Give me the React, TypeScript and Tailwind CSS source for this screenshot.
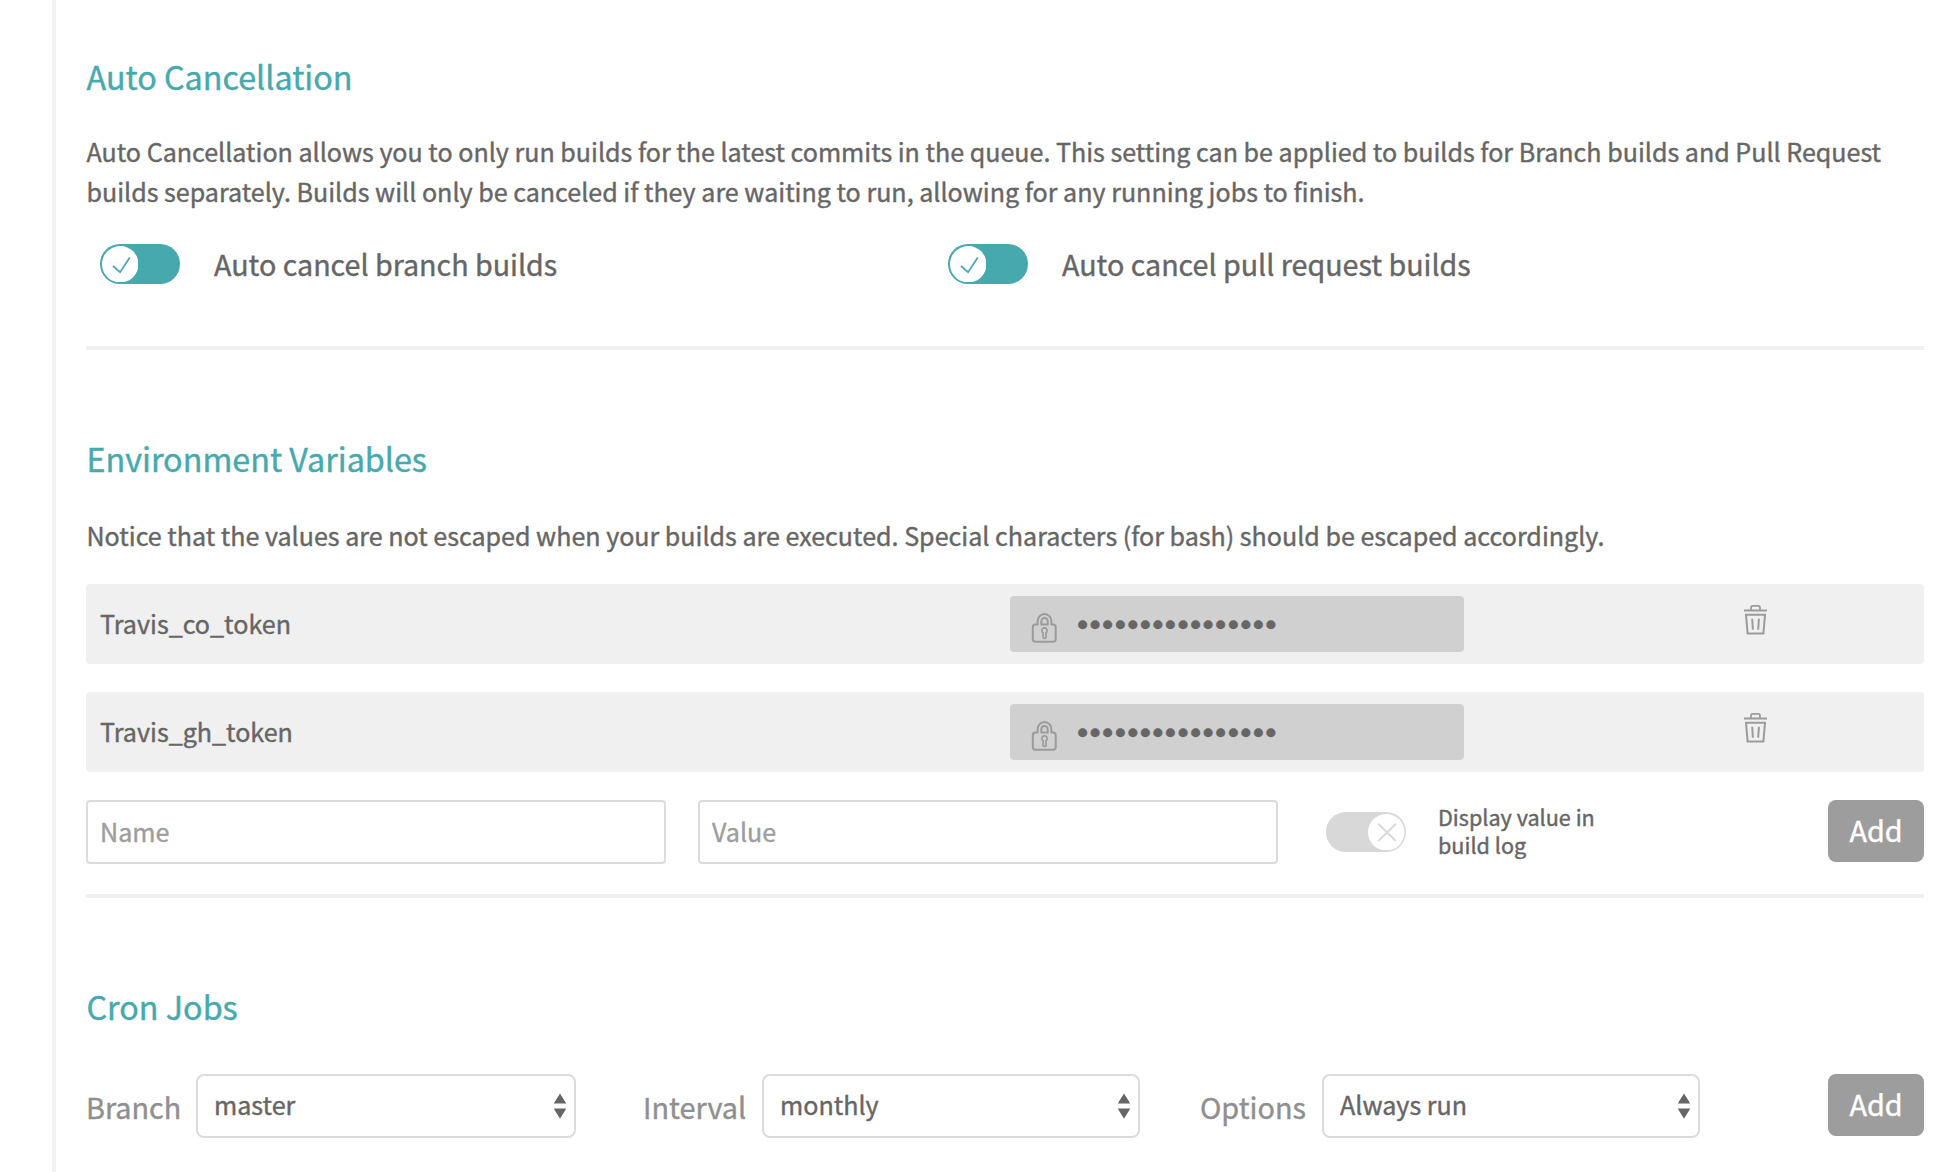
import type { ReactNode } from "react";

const maskedValue = "•".repeat(16);

function LockIcon() {
  return (
    <svg width="27" height="32" viewBox="0 0 27 32" fill="none" stroke="#9b9b9b" strokeWidth="2" strokeLinejoin="round">
      <path d="M6.600 12.600V9.500a6.900 7.600 0 0 1 13.800 0v3.100h1.700c1.600 0 2.600 1 2.600 2.600v11.800c0 1.600-1 2.700-2.600 2.700H4.400c-1.600 0-2.600-1.100-2.600-2.700V15.200c0-1.600 1-2.600 2.600-2.600z" />
      <path d="M10.300 12.600V9.600a3.200 3.700 0 0 1 6.400 0v3z" />
      <path d="M12.200 20.900a2.700 2.700 0 1 1 2.600 0l.3 4.100c0 .9-.6 1.400-1.600 1.400s-1.600-.5-1.600-1.400z" strokeWidth="1.700" />
    </svg>
  );
}

function TrashIcon() {
  return (
    <svg width="24" height="32" viewBox="0 0 24 32" fill="none" stroke="#9b9b9b" strokeWidth="2">
      <path d="M0 6.500h23" />
      <path d="M7 6V3.800c0-1.300.5-2 1.800-2h5.400c1.300 0 1.800.7 1.800 2V6" strokeWidth="1.800" />
      <path d="M2 10.700h19l-1.600 18.900H3.600z" />
      <path d="M8.200 14.700l.7 11M14.900 14.700l-.7 11" />
    </svg>
  );
}

function SortArrows() {
  return (
    <svg width="14" height="26" viewBox="0 0 14 26" fill="#666" className="pointer-events-none absolute right-[9.500px] top-[19px]">
      <path d="M7 0.500L13.300 10.500H.7zM.7 15.500h12.600L7 25.800z" />
    </svg>
  );
}

function Toggle({ on }: { on?: boolean }) {
  return on ? (
    <span className="flex h-10 w-20 shrink-0 items-center rounded-full bg-[#45a9ad] pl-[1.5px]">
      <svg width="36.500" height="36.500" viewBox="0 0 36.500 36.500" fill="none">
        <circle cx="18.250" cy="18.250" r="18.250" fill="#fff" />
        <path d="M10.900 20l7.200 6.200 9.600-14.700" stroke="#45a9ad" strokeWidth="1.700" />
      </svg>
    </span>
  ) : (
    <span className="flex h-10 w-20 shrink-0 items-center justify-end rounded-full bg-[#d8d8d8] pr-[1.5px]">
      <svg width="36.500" height="36.500" viewBox="0 0 36.500 36.500" fill="none">
        <circle cx="18.250" cy="18.250" r="18.250" fill="#fff" />
        <path d="M10.300 9.700l17.600 17.400M27.900 9.700L10.300 27.100" stroke="#d8d8d8" strokeWidth="1.900" />
      </svg>
    </span>
  );
}

function Heading({ children }: { children: ReactNode }) {
  return <h2 className="pl-[0.5px] text-[32.3px] leading-10 text-[#45a9ad]">{children}</h2>;
}

function Divider() {
  return <hr className="h-1 border-0 bg-[#f0f0f0]" />;
}

function VariableRow({ name }: { name: string }) {
  return (
    <li className="flex h-20 items-center rounded-[4px] bg-[#f0f0f0] pl-[14px]">
      <span className="mb-[2px] w-[910px] leading-10">{name}</span>
      <span className="flex h-14 w-[454px] items-center rounded-[4px] bg-[#d0d0d0] pl-[21px]">
        <span className="mt-[7px]">
          <LockIcon />
        </span>
        <span className="ml-[19px] font-['Liberation_Sans',sans-serif] text-[32px] leading-[56px] tracking-[1.35px]">
          {maskedValue}
        </span>
      </span>
      <button aria-label={"Delete " + name} className="mb-[9px] ml-[280px]">
        <TrashIcon />
      </button>
    </li>
  );
}

function AddButton() {
  return (
    <button className="ml-auto h-[62px] w-24 rounded-lg bg-[#9d9d9d] pb-[3px] text-[28.8px] leading-10 text-white">
      Add
    </button>
  );
}

function SelectBox({ value, className }: { value: string; className: string }) {
  return (
    <div className={"relative h-16 " + className}>
      <select className="h-full w-full appearance-none rounded-lg border-2 border-[#dcdcdc] bg-white pb-[2px] pl-4 text-[#666]">
        <option>{value}</option>
      </select>
      <SortArrows />
    </div>
  );
}

export default function App() {
  return (
    <div className="flex h-[1172px] w-[1946px] overflow-hidden bg-white font-['Noto_Sans_CJK_SC','Source_Sans_Pro',sans-serif] text-[25.1px] text-[#666] [-webkit-text-stroke-width:0.4px]">
      <aside className="w-14 shrink-0 border-r-4 border-[#f2f2f2]" />
      <main className="ml-[30px] w-[1838px] shrink-0 pt-14">
        <section>
          <Heading>Auto Cancellation</Heading>
          <p className="mt-[35px] whitespace-nowrap pl-[0.5px] text-[25.07px] leading-10">
            Auto Cancellation allows you to only run builds for the latest commits in the queue. This setting can be
            applied to builds for Branch builds and Pull Request
            <br />
            builds separately. Builds will only be canceled if they are waiting to run, allowing for any running jobs to
            finish.
          </p>
          <div className="mt-[33px] mb-[62px] flex h-10 pl-[14px] text-[28.65px] leading-10">
            <div className="flex w-[848px] gap-[34px]">
              <Toggle on />
              <span>Auto cancel branch builds</span>
            </div>
            <div className="flex gap-[34px]">
              <Toggle on />
              <span>Auto cancel pull request builds</span>
            </div>
          </div>
          <Divider />
        </section>

        <section className="pt-[88px]">
          <Heading>Environment Variables</Heading>
          <p className="mt-[37px] whitespace-nowrap pl-[0.5px] text-[25.07px] leading-10">
            Notice that the values are not escaped when your builds are executed. Special characters (for bash) should
            be escaped accordingly.
          </p>
          <ul className="mt-[29px] flex flex-col gap-7">
            <VariableRow name="Travis_co_token" />
            <VariableRow name="Travis_gh_token" />
          </ul>
          <form className="mt-7 mb-[30px] flex h-16">
            <input
              placeholder="Name"
              className="h-16 w-[580px] rounded-[4px] border-2 border-[#dcdcdc] px-3 pb-[2px] placeholder:text-[#9d9d9d] placeholder:opacity-100"
            />
            <input
              placeholder="Value"
              className="ml-8 h-16 w-[580px] rounded-[4px] border-2 border-[#dcdcdc] px-3 pb-[2px] placeholder:text-[#9d9d9d] placeholder:opacity-100"
            />
            <div className="ml-12 flex items-center">
              <Toggle />
              <span className="mb-[2px] ml-[32px] text-[21.6px] leading-7">
                Display value in
                <br />
                build log
              </span>
            </div>
            <AddButton />
          </form>
          <Divider />
        </section>

        <section className="pt-[88px]">
          <Heading>Cron Jobs</Heading>
          <form className="mt-12 flex h-16">
            <label className="w-[110px] text-[28.8px] leading-[66px] text-[#8f8f8f]">Branch</label>
            <SelectBox value="master" className="w-[380px]" />
            <label className="ml-[67px] w-[119px] text-[28.8px] leading-[66px] text-[#8f8f8f]">Interval</label>
            <SelectBox value="monthly" className="w-[378px]" />
            <label className="ml-[60px] w-[122px] text-[28.8px] leading-[66px] text-[#8f8f8f]">Options</label>
            <SelectBox value="Always run" className="w-[378px]" />
            <AddButton />
          </form>
        </section>
      </main>
    </div>
  );
}
